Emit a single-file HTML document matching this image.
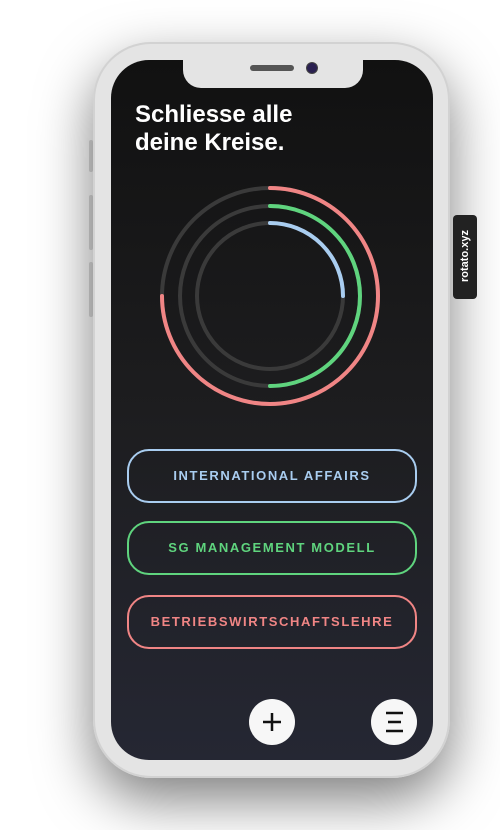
<!DOCTYPE html>
<html><head><style>
body{margin:0;width:500px;height:830px;background:#fff;position:relative;overflow:hidden;font-family:"Liberation Sans",sans-serif}
.phone{position:absolute;left:93px;top:42px;width:357px;height:736px;border-radius:58px;background:#e4e4e4;box-shadow:0 22px 55px rgba(0,0,0,.5),inset 0 0 0 2px #d2d2d2}
.screen{position:absolute;left:111px;top:60px;width:322px;height:700px;border-radius:38px;background:linear-gradient(#111 0%,#1d1d1f 50%,#252733 100%);overflow:hidden}
.notch{position:absolute;left:183px;top:58px;width:180px;height:30px;background:#e4e4e4;border-radius:0 0 18px 18px}
.spk{position:absolute;left:250px;top:65px;width:44px;height:6px;border-radius:3px;background:#555}
.cam{position:absolute;left:307px;top:63px;width:10px;height:10px;border-radius:50%;background:#2a2050;box-shadow:0 0 0 1px #444}
h1{position:absolute;left:135px;top:101px;margin:0;color:#fff;font-size:24px;line-height:28px;font-weight:bold}
.btn{position:absolute;left:127px;width:286px;height:50px;border:2px solid;border-radius:22px;text-align:center;line-height:50px;font-size:13px;font-weight:bold;letter-spacing:1.6px}
.circ{position:absolute;width:46px;height:46px;border-radius:50%;background:#f7f7f7}
.tab{position:absolute;left:453px;top:215px;width:24px;height:84px;background:#222;border-radius:4px}
.tab span{position:absolute;left:-30px;top:35px;width:84px;text-align:center;transform:rotate(-90deg);color:#fff;font-size:11px;font-weight:bold}
.side{position:absolute;left:89px;width:4px;background:#ddd;border-radius:2px}
</style></head><body>
<div class="side" style="top:140px;height:32px"></div>
<div class="side" style="top:195px;height:55px"></div>
<div class="side" style="top:262px;height:55px"></div>
<div class="phone"></div>
<div class="screen"></div>
<div class="notch"></div>
<div class="spk"></div><div class="cam"></div>
<h1>Schliesse alle<br>deine Kreise.</h1>
<svg style="position:absolute;left:0;top:0" width="500" height="830" fill="none" stroke-width="4" stroke-linecap="round">
<circle cx="270" cy="296" r="108" stroke="#3a3a3a"/>
<circle cx="270" cy="296" r="90" stroke="#3a3a3a"/>
<circle cx="270" cy="296" r="73" stroke="#3a3a3a"/>
<path d="M270 188 A108 108 0 1 1 162 296" stroke="#f08585"/>
<path d="M270 206 A90 90 0 0 1 270 386" stroke="#5fd47e"/>
<path d="M270 223 A73 73 0 0 1 343 296" stroke="#a9cdf0"/>
</svg>
<div class="btn" style="top:449px;border-color:#a9cdf0;color:#a9cdf0">INTERNATIONAL AFFAIRS</div>
<div class="btn" style="top:521px;border-color:#5fd47e;color:#5fd47e">SG MANAGEMENT MODELL</div>
<div class="btn" style="top:595px;border-color:#f08585;color:#f08585">BETRIEBSWIRTSCHAFTSLEHRE</div>
<div class="circ" style="left:249px;top:699px"></div>
<div class="circ" style="left:371px;top:699px"></div>
<svg style="position:absolute;left:0;top:0" width="500" height="830" stroke="#111" stroke-width="2.5">
<path d="M263 722h18M272 713v18"/>
<path d="M386 713h17M388 722h13M386 731h17"/>
</svg>
<div class="tab"><span>rotato.xyz</span></div>
</body></html>
